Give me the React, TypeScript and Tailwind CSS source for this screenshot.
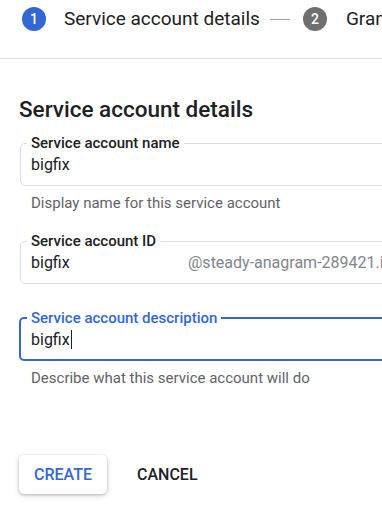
import React from 'react';

const BLUE = 'text-[#3367d6]';

interface FieldProps {
  label: string;
  value: string;
  suffix?: string;
  helper?: string;
  focused?: boolean;
}

const OutlinedField = ({ label, value, suffix, helper, focused }: FieldProps) => {
  return (
    <div className="flex flex-col">
      <fieldset
        className={
          focused
            ? 'ml-[19px] w-[420px] rounded-[5px] border-2 border-[#3367d6] pb-[8px] pl-[10px] pt-[1px]'
            : 'ml-[20px] w-[420px] rounded-[5px] border border-[#dadce0] pb-[8px] pl-[10px] pt-[2px]'
        }
      >
        <legend
          className={`-ml-[4px] px-[4px] text-[15px] leading-[16px] font-medium ${
            focused ? BLUE : 'text-[#202124]'
          }`}
        >
          {label}
        </legend>
        <div className="flex h-[24px] items-center whitespace-nowrap text-[16px] leading-[24px] text-[#202124]">
          <span className="w-[157px] shrink-0">
            {value}
            {focused && <span className="ml-[1px] inline-block h-[19px] w-px translate-y-[4px] bg-[#202124]" />}
          </span>
          {suffix && <span className="text-[#80868b]">{suffix}</span>}
        </div>
      </fieldset>
      {helper && (
        <p className="mt-[7px] pl-[31px] text-[15px] leading-[20px] text-[#5f6368]">{helper}</p>
      )}
    </div>
  );
};

const StepDot = ({ n, active }: { n: number; active?: boolean }) => (
  <span
    className={`flex h-[24px] w-[24px] shrink-0 items-center justify-center rounded-full text-[14px] font-medium text-white ${
      active ? 'bg-[#3367d6]' : 'bg-[#6f6f6f]'
    }`}
  >
    {n}
  </span>
);

export default function App() {
  return (
    <div className="h-[526px] w-[382px] overflow-hidden bg-white font-['Roboto',sans-serif]">
      <div className="h-[59px] border-b border-[#e0e0e0] pt-[7px] pl-[22px]">
        <div className="flex h-[24px] items-center whitespace-nowrap">
          <StepDot n={1} active />
          <span className="ml-[18px] text-[19px] text-[#202124]">Service account details</span>
          <span className="ml-[10px] h-px w-[20px] shrink-0 bg-[#9aa0a6]" />
          <span className="ml-[13px]">
            <StepDot n={2} />
          </span>
          <span className="ml-[19px] text-[19px] text-[#202124]">Grant this service account access</span>
        </div>
      </div>

      <h1 className="mt-[36px] pl-[19px] text-[22.5px] leading-[28px] font-medium text-[#202124]">
        Service account details
      </h1>

      <div className="mt-[12px] flex flex-col gap-[20px]">
        <OutlinedField label="Service account name" value="bigfix" helper="Display name for this service account" />
        <OutlinedField label="Service account ID" value="bigfix" suffix="@steady-anagram-289421.iam.gserviceaccount.com" />
        <div className="mt-[6px]">
          <OutlinedField
            label="Service account description"
            value="bigfix"
            helper="Describe what this service account will do"
            focused
          />
        </div>
      </div>

      <div className="mt-[67px] flex gap-[15px] pl-[19px]">
        <button className={`h-[39px] rounded-[5px] bg-white px-[15px] text-[16px] font-medium ${BLUE} shadow-[0_1px_3px_rgba(60,64,67,0.3),0_2px_6px_rgba(60,64,67,0.15)]`}>
          CREATE
        </button>
        <button className="h-[39px] rounded-[5px] px-[15px] text-[16px] font-medium text-[#202124]">CANCEL</button>
      </div>
    </div>
  );
}
